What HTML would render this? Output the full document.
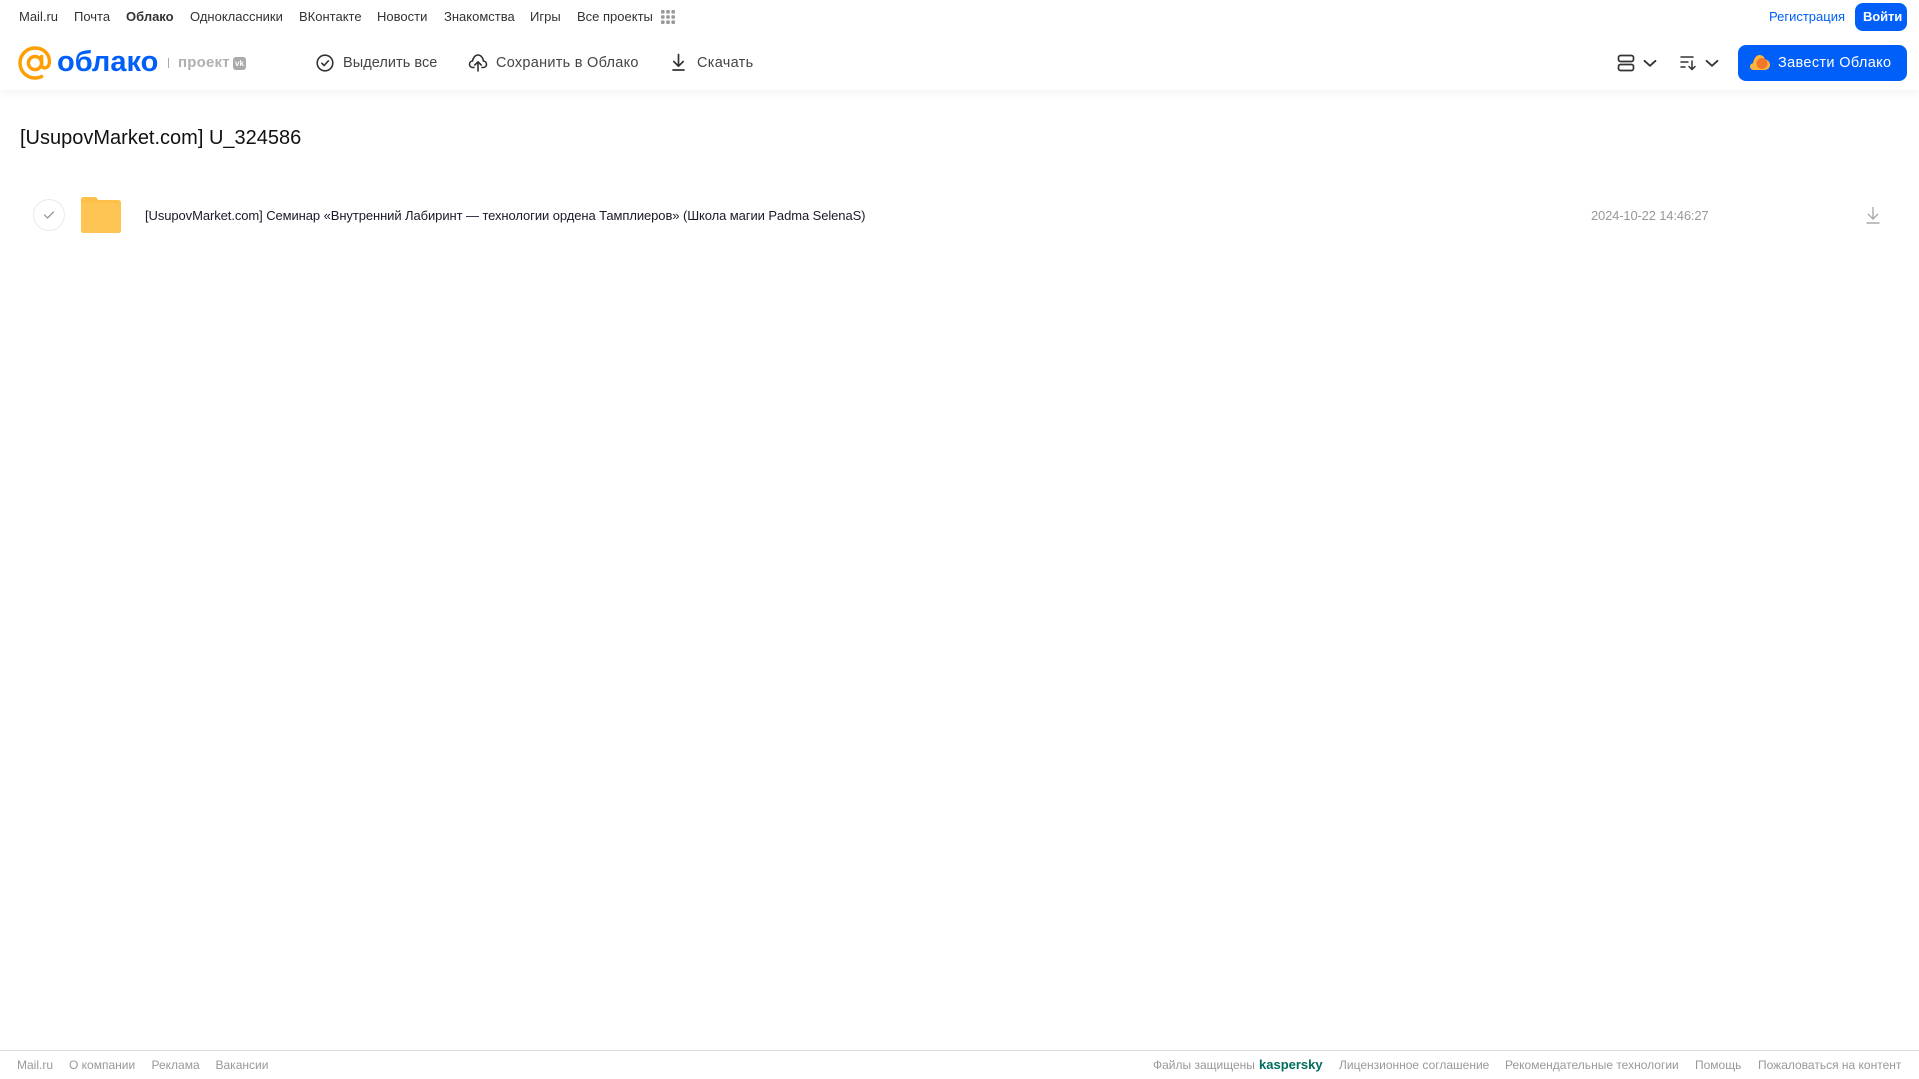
<!DOCTYPE html>
<html lang="ru"><head><meta charset="utf-8"><title>Облако</title>
<style>
html,body{margin:0;padding:0;width:1919px;height:1079px;overflow:hidden;background:#fff;font-family:"Liberation Sans",Arial,sans-serif}
.t{position:absolute;white-space:nowrap;line-height:20px}
.n{top:7px;font-size:13px;color:#333}
.b{top:53px;font-size:14.5px;color:#444;letter-spacing:.3px}
.f{top:1055px;font-size:12px;color:#999}
svg{position:absolute;display:block}
</style></head><body>
<div style="position:absolute;left:0;top:0;width:1919px;height:90px;background:#fff;box-shadow:0 2px 10px rgba(0,0,0,.06)"></div>

<span class="t n" style="left:19px">Mail.ru</span>
<span class="t n" style="left:74px">Почта</span>
<span class="t n" style="left:126px;font-weight:700">Облако</span>
<span class="t n" style="left:190px">Одноклассники</span>
<span class="t n" style="left:299px">ВКонтакте</span>
<span class="t n" style="left:377px">Новости</span>
<span class="t n" style="left:444px">Знакомства</span>
<span class="t n" style="left:530px">Игры</span>
<span class="t n" style="left:577px">Все проекты</span>
<svg style="left:660px;top:9px" width="16" height="16" fill="#999"><rect x="1" y="1" width="3.6" height="3.6" rx="1"/><rect x="6.2" y="1" width="3.6" height="3.6" rx="1"/><rect x="11.4" y="1" width="3.6" height="3.6" rx="1"/><rect x="1" y="6.2" width="3.6" height="3.6" rx="1"/><rect x="6.2" y="6.2" width="3.6" height="3.6" rx="1"/><rect x="11.4" y="6.2" width="3.6" height="3.6" rx="1"/><rect x="1" y="11.4" width="3.6" height="3.6" rx="1"/><rect x="6.2" y="11.4" width="3.6" height="3.6" rx="1"/><rect x="11.4" y="11.4" width="3.6" height="3.6" rx="1"/></svg>

<span class="t" style="left:1769px;top:7px;font-size:13px;color:#005ff9">Регистрация</span>
<div style="position:absolute;left:1855px;top:3px;width:52px;height:28px;background:#005ff9;border-radius:8px"></div>
<span class="t" style="left:1863px;top:7px;font-size:13px;font-weight:700;color:#fff;letter-spacing:-.1px">Войти</span>

<svg style="left:18px;top:46px" width="34" height="34" viewBox="0 0 34 34" fill="none" stroke="#ff9e00" stroke-width="3.4" stroke-linecap="round"><circle cx="17" cy="17" r="6.6"/><path d="M23.6 10.5v8.3c0 4.4 7.3 4.6 7.8-2.4C32 8.2 25.500 2 17 2 8.700 2 2 8.700 2 17s6.700 15 15 15c2.700 0 4.700-.5 6.600-1.500"/></svg>
<span class="t" style="left:57px;top:44px;font-size:29px;line-height:36px;font-weight:700;color:#005ff9">облако</span>
<div style="position:absolute;left:168px;top:58px;width:1px;height:10px;background:#aaa"></div>
<span class="t" style="left:178px;top:53px;font-size:15px;font-weight:700;color:#b0b0b0;letter-spacing:.2px">проект</span>
<div style="position:absolute;left:233px;top:57px;width:13px;height:13px;border-radius:3px;background:#aaa;color:#fff;font:700 8px/13px 'Liberation Sans',sans-serif;text-align:center">vk</div>

<svg style="left:316px;top:54px" width="18" height="18" fill="none" stroke="#333" stroke-width="1.600" stroke-linecap="round" stroke-linejoin="round"><circle cx="9" cy="9" r="7.800"/><path d="M5.800 9.200l2.300 2.300 4.200-4.600"/></svg>
<span class="t b" style="left:343px;letter-spacing:.05px">Выделить все</span>
<svg style="left:468px;top:53px" width="20" height="19" fill="none" stroke="#333" stroke-width="1.600" stroke-linecap="round" stroke-linejoin="round"><path d="M6 14.500H5C2.800 14.500 1.500 13 1.500 11.200c0-1.800 1.300-3 3-3.200C5 4.800 7.200 2 10 2c2.900 0 5 2.600 5.400 6 1.800.2 3.100 1.500 3.100 3.200 0 1.800-1.300 3.300-3.500 3.300h-1"/><path d="M10 18V9M6.800 12L10 8.800l3.200 3.200"/></svg>
<span class="t b" style="left:496px;letter-spacing:.27px">Сохранить в Облако</span>
<svg style="left:670px;top:53px" width="17" height="18" fill="none" stroke="#333" stroke-width="1.700" stroke-linecap="round" stroke-linejoin="round"><path d="M8.500 1.500V13M3.800 8.500l4.700 4.700 4.700-4.700M3 17h11"/></svg>
<span class="t b" style="left:697px">Скачать</span>

<svg style="left:1617px;top:54px" width="18" height="18" fill="none" stroke="#333" stroke-width="1.700"><rect x="1.500" y="1.500" width="15" height="6" rx="2"/><rect x="1.500" y="10.500" width="15" height="6" rx="2"/></svg>
<svg style="left:1643px;top:59px" width="14" height="9" fill="none" stroke="#333" stroke-width="1.800" stroke-linecap="round" stroke-linejoin="round"><path d="M1.500 1.800L7 6.800l5.500-5"/></svg>
<svg style="left:1680px;top:55px" width="17" height="16" fill="none" stroke="#333" stroke-width="1.500" stroke-linecap="round" stroke-linejoin="round"><path d="M1 2h12M1 7h7M1 12h4M12 6v8.500M9 11.500l3 3 3-3"/></svg>
<svg style="left:1705px;top:59px" width="14" height="9" fill="none" stroke="#333" stroke-width="1.800" stroke-linecap="round" stroke-linejoin="round"><path d="M1.500 1.800L7 6.800l5.500-5"/></svg>

<div style="position:absolute;left:1738px;top:45px;width:169px;height:36px;background:#005ff9;border-radius:8px"></div>
<svg style="left:1750px;top:54px" width="20" height="17" viewBox="0 0 20 17"><path d="M3.500 16C1.500 16 0 14.500 0 12.500 0 10.700 1.300 9.400 3 9.200 3.300 6 5.800 1 9.500 1c3 0 5 2 5.500 4.500 2.800.2 5 2.500 5 5.300 0 3-2.300 5.200-5.200 5.200z" fill="#ffb43c"/><circle cx="12" cy="9.500" r="5.500" fill="#f4762a"/></svg>
<span class="t" style="left:1778px;top:53px;font-size:14.500px;color:#fff;letter-spacing:.35px">Завести Облако</span>

<span class="t" style="left:20px;top:125px;font-size:20px;line-height:26px;color:#111">[UsupovMarket.com] U_324586</span>

<div style="position:absolute;left:33px;top:199px;width:30px;height:30px;border:1px solid #eaeaea;border-radius:50%"></div>
<svg style="left:43px;top:210px" width="12" height="10" fill="none" stroke="#999" stroke-width="1.300" stroke-linecap="round" stroke-linejoin="round"><path d="M1.500 5l3 3 6-6"/></svg>
<svg style="left:81px;top:197px" width="40" height="36" viewBox="0 0 40 36"><path d="M0 3C0 1 1 0 3 0h10c2 0 3.500 1 4 3h20c2 0 3 1 3 3v27c0 2-1 3-3 3H3c-2 0-3-1-3-3z" fill="#ffc04a"/><path d="M0 9c0-2 1-3 3-3h34c2 0 3 1 3 3v24c0 2-1 3-3 3H3c-2 0-3-1-3-3z" fill="#ffc554"/></svg>
<span class="t" style="left:145px;top:206px;font-size:13px;color:#1a1a2a;letter-spacing:-.085px">[UsupovMarket.com] Семинар «Внутренний Лабиринт — технологии ордена Тамплиеров» (Школа магии Padma SelenaS)</span>
<span class="t" style="left:1591px;top:206px;font-size:13px;color:#999;letter-spacing:-.17px">2024-10-22 14:46:27</span>
<svg style="left:1865px;top:206px" width="16" height="18" fill="none" stroke="#aaa" stroke-width="1.400"><path d="M8 1v11.500M3 8l5 5 5-5M1.500 17h13"/></svg>

<div style="position:absolute;left:0;top:1050px;width:1919px;height:1px;background:#ddd"></div>
<span class="t f" style="left:17px">Mail.ru</span>
<span class="t f" style="left:69px">О компании</span>
<span class="t f" style="left:151.500px">Реклама</span>
<span class="t f" style="left:215.500px">Вакансии</span>
<span class="t f" style="left:1153px">Файлы защищены</span>
<span class="t f" style="left:1259px;font-weight:700;color:#006d5c;font-size:13px">kaspersky</span>
<span class="t f" style="left:1339px">Лицензионное соглашение</span>
<span class="t f" style="left:1505px">Рекомендательные технологии</span>
<span class="t f" style="left:1695px">Помощь</span>
<span class="t f" style="left:1758px">Пожаловаться на контент</span>
</body></html>
